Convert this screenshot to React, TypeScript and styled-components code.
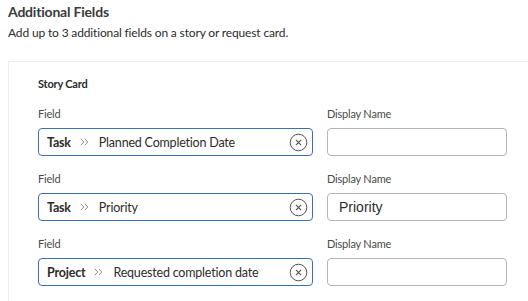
import { createGlobalStyle, styled } from "styled-components";

const GlobalStyle = createGlobalStyle`
  html, body {
    margin: 0;
    padding: 0;
    background: #ffffff;
    font-family: "Lato", "Noto Sans", sans-serif;
    color: #2c2c2c;
  }
`;

const Page = styled.div`
  padding: 3px 0 0 8px;
  overflow: hidden;
  height: 301px;
  box-sizing: border-box;
`;

const Title = styled.h2`
  margin: 0;
  font-size: 14px;
  font-weight: 700;
  line-height: 18px;
  letter-spacing: -0.2px;
  color: #3a3a3a;
`;

const Subtitle = styled.p`
  margin: 4px 0 0;
  font-size: 12px;
  line-height: 16px;
  letter-spacing: -0.15px;
  color: #2c2c2c;
`;

const Card = styled.section`
  margin-top: 20px;
  border-top: 1px solid #eeeeee;
  border-left: 1px solid #eeeeee;
  padding: 15px 0 0 29px;
  height: 300px;
`;

const CardTitle = styled.div`
  font-size: 11px;
  font-weight: 700;
  line-height: 14px;
  letter-spacing: -0.2px;
  color: #2c2c2c;
  margin-bottom: 16px;
`;

const Row = styled.div`
  display: grid;
  grid-template-columns: 275px 180px;
  column-gap: 14px;
  margin-bottom: 16px;
`;

const Col = styled.div`
  display: flex;
  flex-direction: column;
`;

const Label = styled.label`
  font-size: 11px;
  line-height: 14px;
  letter-spacing: -0.2px;
  color: #4b4b4b;
  margin-bottom: 7px;
`;

const FieldBox = styled.div`
  height: 28px;
  box-sizing: border-box;
  border: 1px solid #3b6fb6;
  border-radius: 4px;
  display: flex;
  align-items: center;
  padding: 0 4px 0 8px;
  font-size: 12.5px;
  letter-spacing: -0.2px;
  color: #2c2c2c;
`;

const Entity = styled.span`
  font-weight: 700;
`;

const Chevron = styled.span`
  display: flex;
  margin: 0 10px 0 9px;
`;

const Spacer = styled.span`
  flex: 1;
`;

const ClearButton = styled.button`
  width: 19px;
  height: 19px;
  padding: 0;
  border: none;
  background: none;
  display: flex;
  align-items: center;
  justify-content: center;
  cursor: pointer;
`;

const TextBox = styled.input`
  height: 28px;
  box-sizing: border-box;
  border: 1px solid #b5b5b5;
  border-radius: 4px;
  padding: 0 11px;
  font-family: "Liberation Sans", Arial, sans-serif;
  font-size: 14px;
  color: #2c2c2c;
  outline: none;
`;

const rows = [
  { entity: "Task", field: "Planned Completion Date", display: "" },
  { entity: "Task", field: "Priority", display: "Priority" },
  { entity: "Project", field: "Requested completion date", display: "" },
];

function ClearIcon() {
  return (
    <svg width="19" height="19" viewBox="0 0 19 19">
      <circle cx="9.5" cy="9.5" r="8.3" fill="none" stroke="#505050" strokeWidth="1" />
      <path d="M6.9 6.9 L12.1 12.1 M12.1 6.9 L6.9 12.1" stroke="#505050" strokeWidth="1.1" />
    </svg>
  );
}

function DoubleChevron() {
  return (
    <svg width="9" height="8" viewBox="0 0 9 8">
      <path d="M0.8 0.8 L3.8 4 L0.8 7.2 M4.8 0.8 L7.8 4 L4.8 7.2" fill="none" stroke="#8a8a8a" strokeWidth="1" />
    </svg>
  );
}

export default function App() {
  return (
    <>
      <GlobalStyle />
      <Page>
        <Title>Additional Fields</Title>
        <Subtitle>Add up to 3 additional fields on a story or request card.</Subtitle>
        <Card>
          <CardTitle>Story Card</CardTitle>
          {rows.map((r, i) => (
            <Row key={i}>
              <Col>
                <Label>Field</Label>
                <FieldBox>
                  <Entity>{r.entity}</Entity>
                  <Chevron>
                    <DoubleChevron />
                  </Chevron>
                  <span>{r.field}</span>
                  <Spacer />
                  <ClearButton aria-label="Clear">
                    <ClearIcon />
                  </ClearButton>
                </FieldBox>
              </Col>
              <Col>
                <Label>Display Name</Label>
                <TextBox defaultValue={r.display} />
              </Col>
            </Row>
          ))}
        </Card>
      </Page>
    </>
  );
}
